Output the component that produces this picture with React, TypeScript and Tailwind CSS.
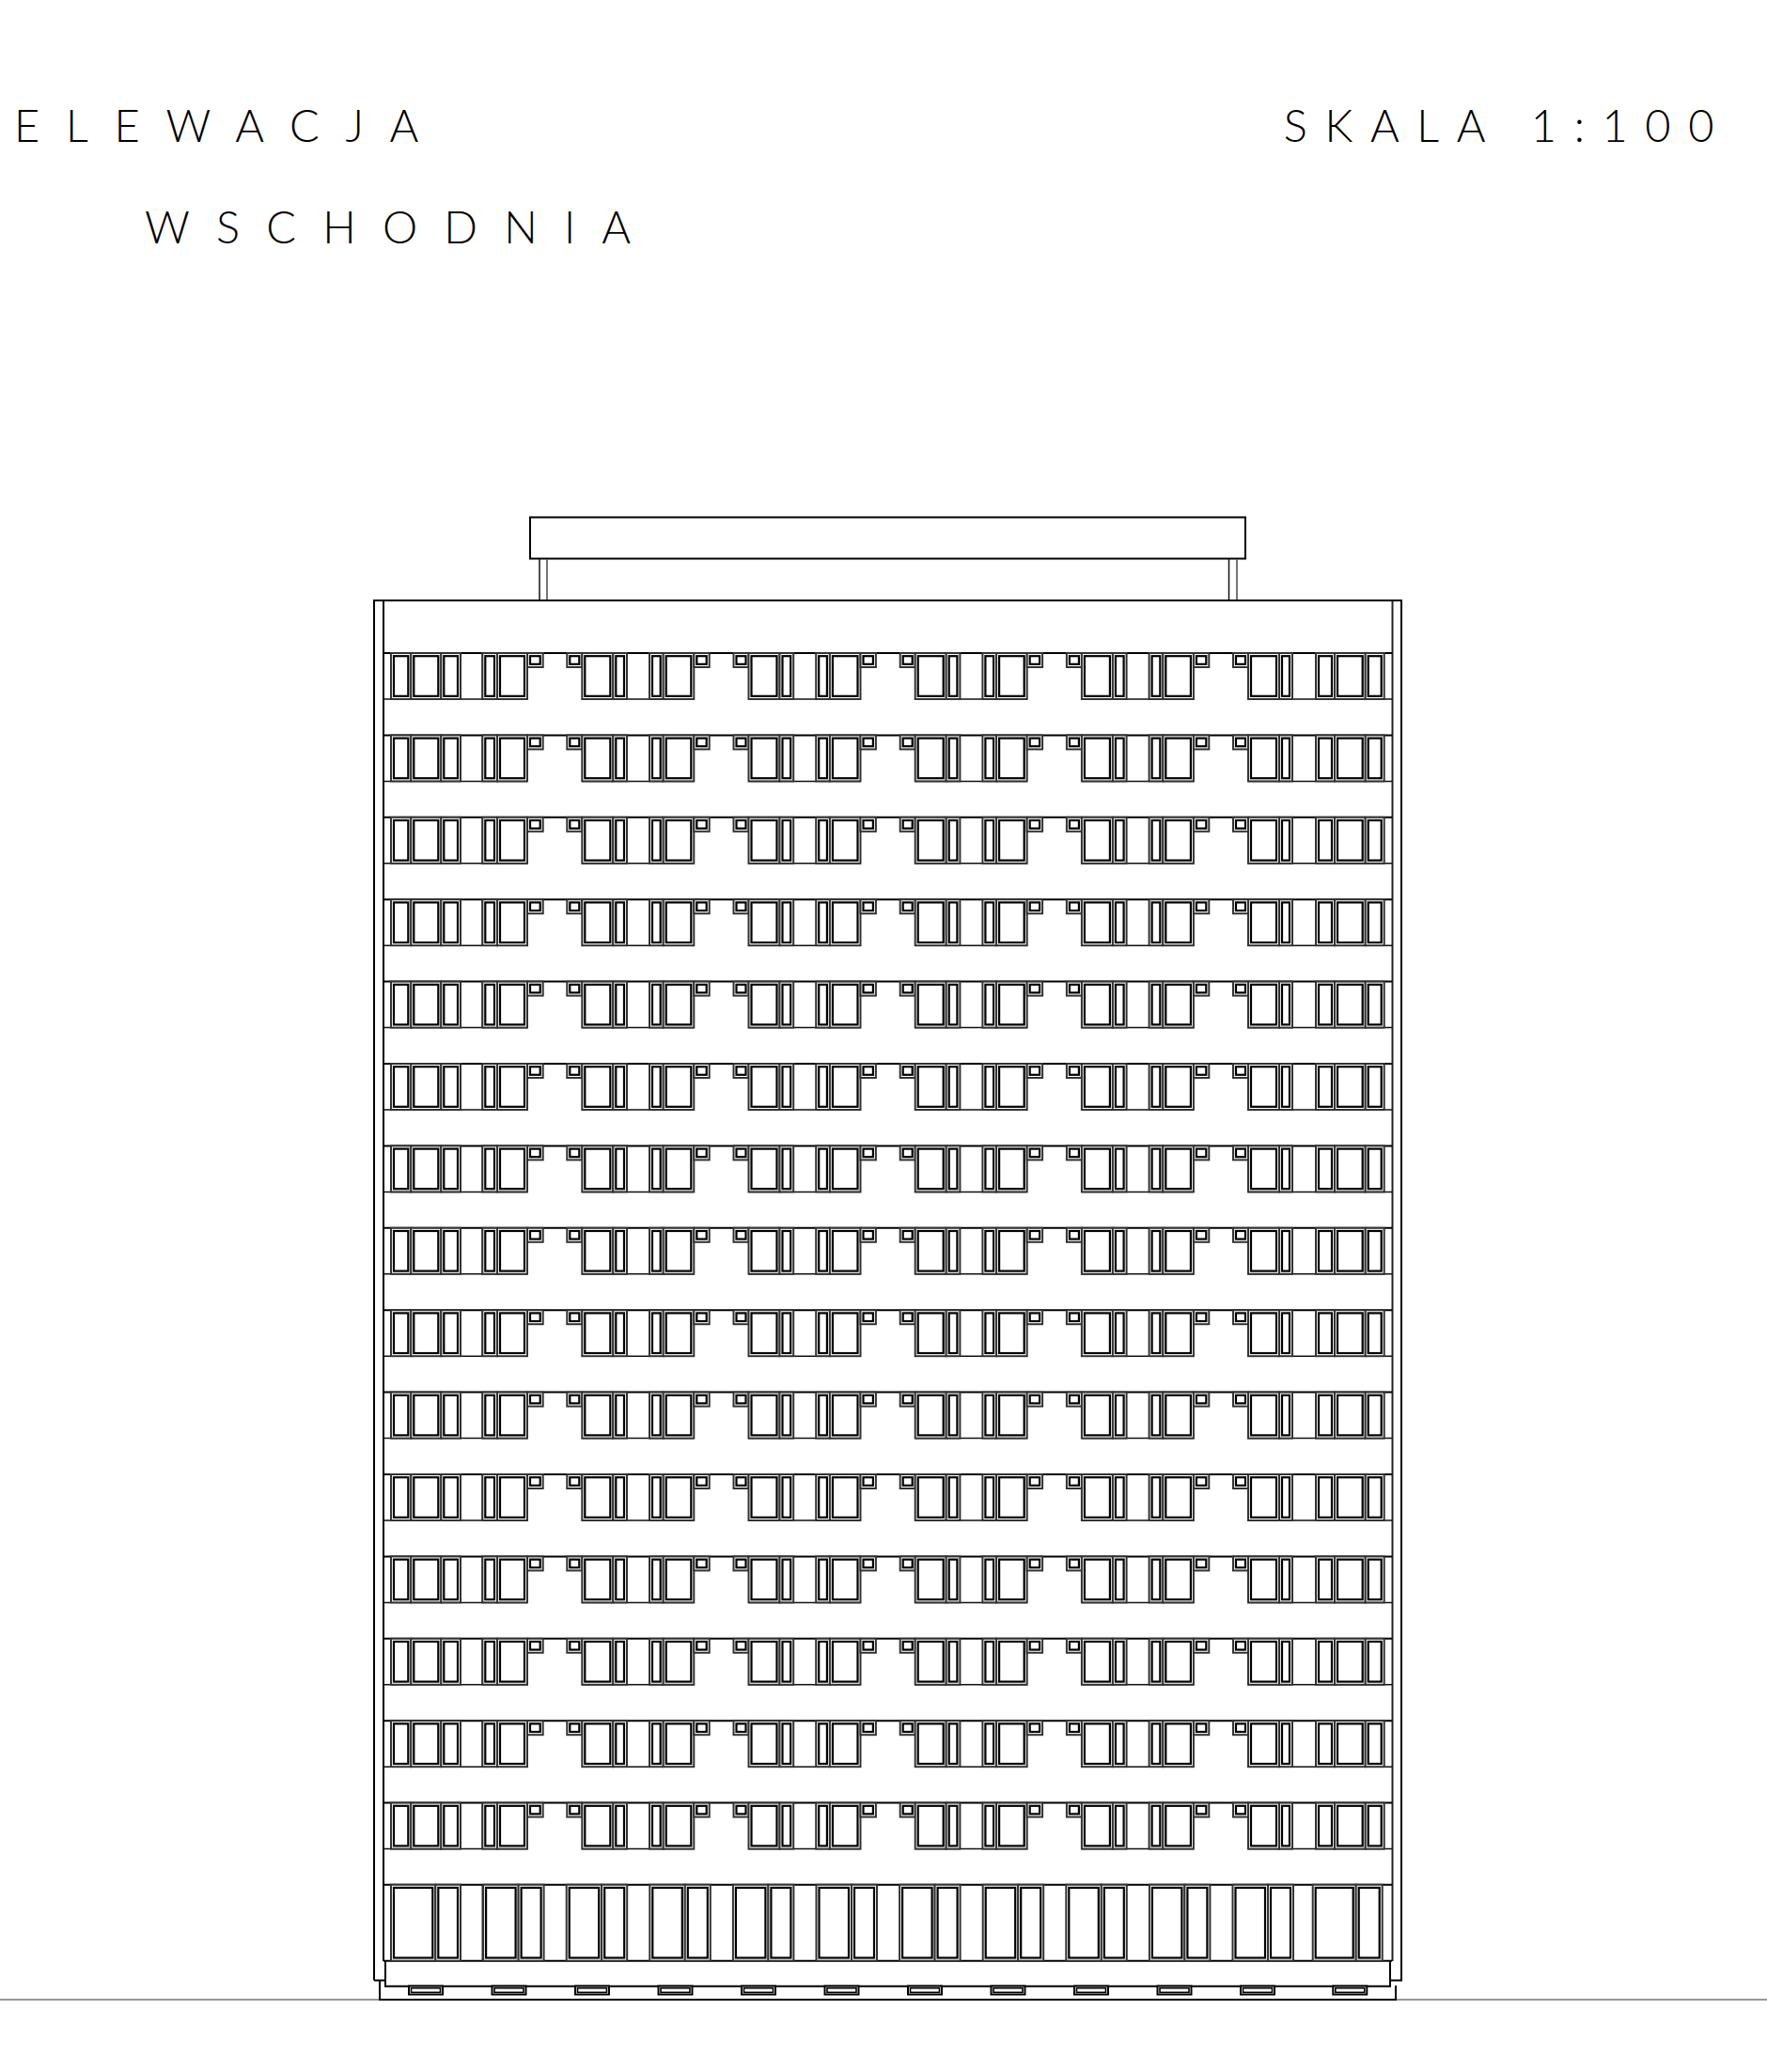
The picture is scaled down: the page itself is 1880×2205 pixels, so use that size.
const FLOORS = Array.from({ length: 15 }, (_, i) => 695 + i * 87.4)
const BAYS = [603.3, 780.5, 957.7, 1134.9, 1312.1]
const GROUND = Array.from({ length: 10 }, (_, k) => 514.1 + k * 88.6)
const VENTS = [...Array.from({ length: 11 }, (_, k) => 435 + k * 88.5), 1418.3]

function Win({ x, y, w, h }: { x: number; y: number; w: number; h: number }) {
  return (
    <g fill="white">
      <rect x={x} y={y} width={w} height={h} stroke="#333" strokeWidth={2} />
      <rect x={x + 3} y={y + 3.2} width={w - 6} height={h - 6.4} stroke="#000" strokeWidth={2.2} />
    </g>
  )
}

function Floor({ y }: { y: number }) {
  const h = 49
  return (
    <g>
      <line x1={408} y1={y} x2={1481} y2={y} stroke="#000" strokeWidth={2} />
      {/* left end */}
      <line x1={408} y1={y + h} x2={561} y2={y + h} stroke="#111" strokeWidth={1.5} />
      <line x1={490} y1={y} x2={490} y2={y + h} stroke="#111" strokeWidth={1.5} />
      <line x1={513.3} y1={y} x2={513.3} y2={y + h} stroke="#111" strokeWidth={1.5} />
      <Win x={416} y={y} w={21.3} h={h} />
      <Win x={437.3} y={y} w={32} h={h} />
      <Win x={469.3} y={y} w={20.7} h={h} />
      <Win x={513.3} y={y} w={15.7} h={h} />
      <Win x={529} y={y} w={32} h={h} />
      <Win x={561} y={y} w={16.7} h={15} />
      {BAYS.slice(0, 4).map((x) => (
        <g key={x}>
          <line x1={x + 16} y1={y + h} x2={x + 135} y2={y + h} stroke="#111" strokeWidth={1.5} />
          <Win x={x} y={y} w={16} h={15} />
          <Win x={x + 16} y={y} w={33} h={h} />
          <Win x={x + 49} y={y} w={14.7} h={h} />
          <Win x={x + 87.7} y={y} w={14.7} h={h} />
          <Win x={x + 102.4} y={y} w={32.6} h={h} />
          <Win x={x + 135} y={y} w={16.4} h={15} />
        </g>
      ))}
      {/* right end */}
      <line x1={1328} y1={y + h} x2={1481} y2={y + h} stroke="#111" strokeWidth={1.5} />
      <line x1={1375} y1={y} x2={1375} y2={y + h} stroke="#111" strokeWidth={1.5} />
      <line x1={1400} y1={y} x2={1400} y2={y + h} stroke="#111" strokeWidth={1.5} />
      <Win x={1312} y={y} w={16} h={15} />
      <Win x={1328} y={y} w={33} h={h} />
      <Win x={1361} y={y} w={14} h={h} />
      <Win x={1400} y={y} w={20} h={h} />
      <Win x={1420} y={y} w={32.7} h={h} />
      <Win x={1452.7} y={y} w={20} h={h} />
    </g>
  )
}

function Building() {
  return (
    <svg viewBox="0 540 1880 1665" className="block h-[1665px] w-[1880px]">
      {/* ground */}
      <line x1={0} y1={2128} x2={1880} y2={2128} stroke="#333" strokeWidth={1} />
      <path d="M404 2107V2128H1485V2113" fill="none" stroke="#000" strokeWidth={2} />

      {/* roof */}
      <rect x={564} y={550.5} width={761} height={44} fill="white" stroke="#000" strokeWidth={2} />
      <line x1={574} y1={595} x2={574} y2={639} stroke="#111" strokeWidth={1.5} />
      <line x1={582} y1={595} x2={582} y2={639} stroke="#666" strokeWidth={1.8} />
      <line x1={1307.5} y1={595} x2={1307.5} y2={639} stroke="#111" strokeWidth={1.5} />
      <line x1={1316} y1={595} x2={1316} y2={639} stroke="#666" strokeWidth={1.8} />

      {/* shell */}
      <path d="M398 2107.5V639H1491V2107.5H1480" fill="none" stroke="#000" strokeWidth={2} />
      <path d="M398 2107.5H410" fill="none" stroke="#000" strokeWidth={2} />
      <line x1={408} y1={639} x2={408} y2={2087} stroke="#000" strokeWidth={2} />
      <line x1={1481.5} y1={639} x2={1481.5} y2={2087} stroke="#222" strokeWidth={2} />
      <path d="M410 2087V2113.7H1479V2087" fill="none" stroke="#000" strokeWidth={2} />

      {FLOORS.map((y) => (
        <Floor key={y} y={y} />
      ))}

      {/* ground floor glazing */}
      <line x1={408} y1={2005.7} x2={1481} y2={2005.7} stroke="#000" strokeWidth={2} />
      <line x1={408} y1={2086.7} x2={1481} y2={2086.7} stroke="#000" strokeWidth={2} />
      {[490, 513.3].map((x) => (
        <line key={x} x1={x} y1={2005.7} x2={x} y2={2086.7} stroke="#111" strokeWidth={1.5} />
      ))}
      <Win x={416} y={2005.7} w={47.3} h={81} />
      <Win x={463.3} y={2005.7} w={26.7} h={81} />
      {GROUND.map((x) => (
        <g key={x}>
          <Win x={x} y={2005.7} w={37.5} h={81} />
          <Win x={x + 37.5} y={2005.7} w={27} h={81} />
        </g>
      ))}
      <Win x={1396.7} y={2005.7} w={46} h={81} />
      <Win x={1442.7} y={2005.7} w={28} h={81} />

      {/* vents */}
      {VENTS.map((x) => (
        <g key={x} fill="white">
          <rect x={x} y={2113.5} width={36} height={9} stroke="#000" strokeWidth={2} />
          <rect x={x + 2.5} y={2115.7} width={31} height={4.6} stroke="#000" strokeWidth={1.6} />
        </g>
      ))}
    </svg>
  )
}

export default function App() {
  return (
    <div className="h-[2205px] w-[1880px] overflow-hidden bg-white text-black">
      <header className="flex h-[540px] items-start justify-between pl-[15px] pr-[38px] pt-[79px] font-['Lato',sans-serif] text-[47px] font-light leading-[108px]">
        <div>
          <p className="tracking-[0.59em]">ELEWACJA</p>
          <p className="ml-[139px] tracking-[0.6em]">WSCHODNIA</p>
        </div>
        <p className="whitespace-pre tracking-[0.395em]">SKALA 1:100</p>
      </header>
      <Building />
    </div>
  )
}
